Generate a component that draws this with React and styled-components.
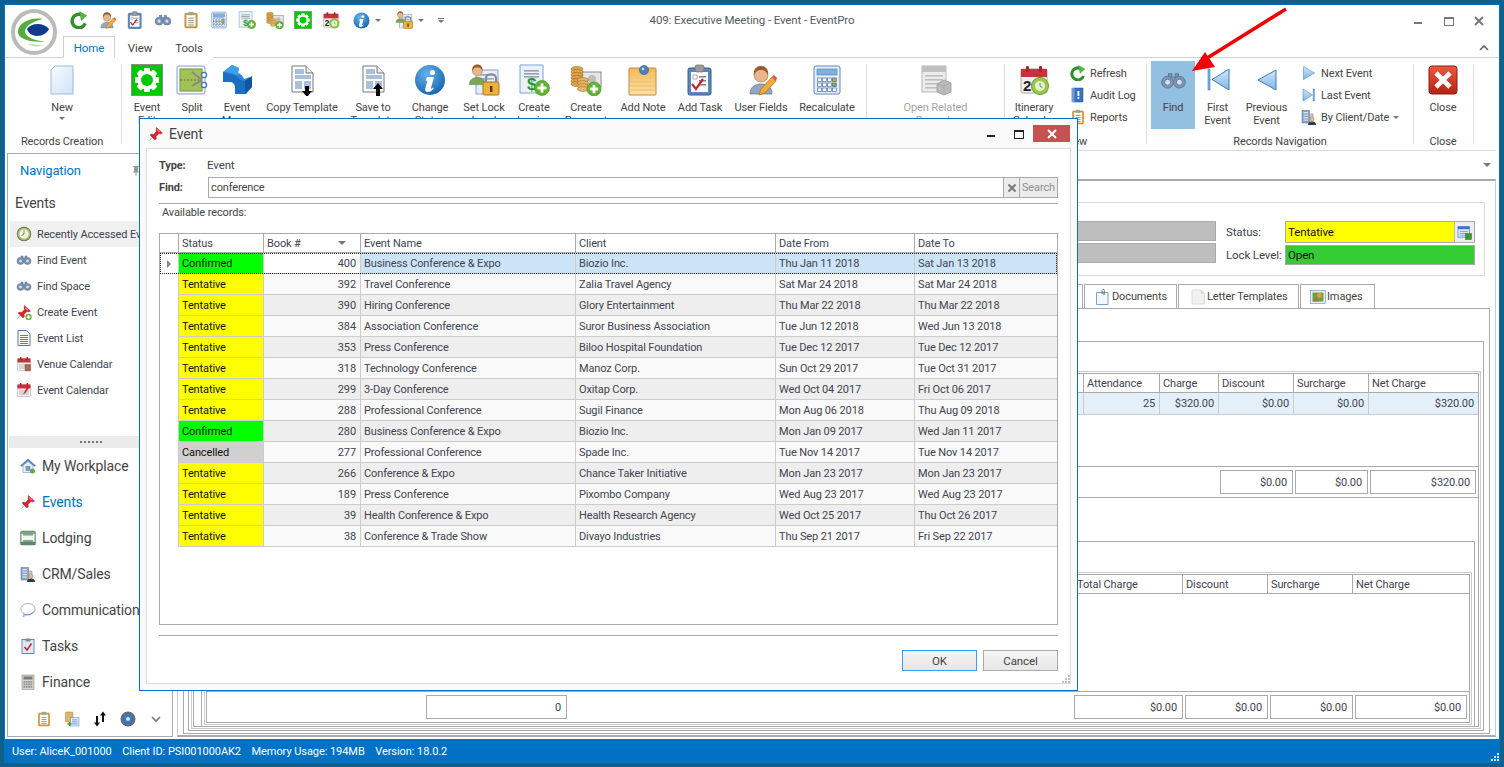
import React from "react";
import styled, { createGlobalStyle } from "styled-components";

const Global = createGlobalStyle`
  html, body { margin: 0; padding: 0; width: 1504px; height: 767px; overflow: hidden; background: #12608a; }
  * { box-sizing: border-box; }
  #root { width: 1504px; height: 767px; }
`;

const FONT = `"Roboto", "Liberation Sans", sans-serif`;

/* ---------- icons ---------- */
const Gear = ({ hole = "#00c800" }) => (
  <g>
    {[0, 45, 90, 135].map((a) => (
      <rect key={a} x="13" y="4" width="6" height="24" rx="1" fill="#fff" transform={`rotate(${a} 16 16)`} />
    ))}
    <circle cx="16" cy="16" r="9.5" fill="#fff" />
    <circle cx="16" cy="16" r="6" fill={hole} />
  </g>
);
const Binoc = () => (
  <g stroke="#5a7394" strokeWidth="1">
    <rect x="10" y="8" width="4" height="6" fill="#7d94b2" />
    <rect x="18" y="8" width="4" height="6" fill="#7d94b2" />
    <rect x="13" y="12" width="6" height="5" fill="#93a5bb" />
    <circle cx="9" cy="18" r="7" fill="#7f95b1" />
    <circle cx="23" cy="18" r="7" fill="#7f95b1" />
    <circle cx="9" cy="18" r="3.6" fill="#cfe0f3" />
    <circle cx="23" cy="18" r="3.6" fill="#cfe0f3" />
  </g>
);
const Plus = ({ x = 24, y = 24, r = 7 }) => (
  <g>
    <circle cx={x} cy={y} r={r} fill="#62b32e" stroke="#3f8f1c" strokeWidth=".6" />
    <rect x={x - r * 0.6} y={y - 1.4} width={r * 1.2} height="2.8" fill="#fff" />
    <rect x={x - 1.4} y={y - r * 0.6} width="2.8" height={r * 1.2} fill="#fff" />
  </g>
);
const Person = ({ x = 0, y = 0, s = 1, body = "#8fa5bd" }) => (
  <g transform={`translate(${x} ${y}) scale(${s})`}>
    <path d="M2 30c0-7 5-10 11-10s11 3 11 10z" fill={body} stroke="#5a6f86" strokeWidth=".7" />
    <circle cx="13" cy="11" r="7" fill="#e8b68c" stroke="#b0774a" strokeWidth=".7" />
    <path d="M6 11c-1-7 4-9 7-9s8 2 7 9c-2-4-4-5-7-5s-5 1-7 5z" fill="#9a5a2a" />
  </g>
);
const Pin = () => (
  <g>
    <path d="M3 29l9-10" stroke="#9a9a9a" strokeWidth="1.6" />
    <path d="M17 3l12 11-4 2-3-1-6 6 1 4-3 3-10-10 3-2 4 1 6-6-1-3z" fill="#d9232b" stroke="#a41218" strokeWidth=".7" />
    <path d="M19 6l6 6-3 1-4-4z" fill="#f37b7f" />
  </g>
);
const Cal = ({ children }) => (
  <g>
    <rect x="3" y="5" width="26" height="24" rx="1.5" fill="#eeeeee" stroke="#a9a9a9" />
    <rect x="3" y="5" width="26" height="8" fill="#c8313a" />
    <rect x="8" y="2" width="3" height="6" rx="1" fill="#b52029" />
    <rect x="21" y="2" width="3" height="6" rx="1" fill="#b52029" />
    {children}
  </g>
);
const Tri = ({ d }) => <path d={d} fill="url(#gTri)" stroke="#3a7dbd" strokeWidth="1" />;
const Clip = ({ c = "#d8a243", children }) => (
  <g>
    <rect x="5" y="4" width="22" height="26" rx="2" fill={c} stroke="#8f6a22" strokeWidth=".8" />
    <rect x="8" y="7" width="16" height="20" fill="#fdfbf2" />
    <rect x="12" y="2" width="8" height="5" rx="1" fill="#a5a5a5" stroke="#777" strokeWidth=".6" />
    {children}
  </g>
);
const Lines = ({ x = 11, w = 10, ys = [12, 16, 20, 24], c = "#8a8a8a" }) => (
  <g>{ys.map((y) => <rect key={y} x={x} y={y} width={w} height="1.6" fill={c} />)}</g>
);
const Tpl = ({ up }) => (
  <g>
    <path d="M6 2h14l7 7v19H6z" fill="#fff" stroke="#777" />
    <path d="M20 2v7h7" fill="#e8e8e8" stroke="#777" />
    <rect x="9" y="5" width="9" height="5" fill="#a9c0dd" />
    <rect x="9" y="11" width="16" height="4" fill="#a9c0dd" />
    <rect x="9" y="17" width="7" height="8" fill="#a9c0dd" />
    <rect x="18" y="17" width="7" height="8" fill="#a9c0dd" />
    {up ? (
      <path d="M21 19l5 6h-3v7h-4v-7h-3z" fill="#000" />
    ) : (
      <path d="M19 22h4v5h3l-5 6-5-6h3z" fill="#000" />
    )}
  </g>
);
const Calc = ({ c = "#5f86c2" }) => (
  <g>
    <rect x="3" y="2" width="26" height="28" rx="2" fill="#e7eef8" stroke={c} />
    <rect x="6" y="5" width="20" height="6" fill="#7fb0df" stroke="#4b7db5" strokeWidth=".6" />
    {[0, 1, 2, 3].map((i) =>
      [0, 1, 2].map((j) => (
        <rect key={`${i}${j}`} x={6.5 + i * 5} y={14 + j * 5} width="3.8" height="3.6" fill={i === 3 && j < 2 ? (j ? "#7fae3b" : "#e09a35") : "#fff"} stroke="#4b6da0" strokeWidth=".7" />
      ))
    )}
  </g>
);

const ICONS = {
  gear: <><rect x=".5" y=".5" width="31" height="31" fill="#00c800" stroke="#8a8a8a" /><Gear /></>,
  split: (
    <g>
      <rect x="1" y="2" width="28" height="28" rx="2" fill="#f2f5fa" stroke="#8aa0c0" />
      <rect x="4" y="5" width="22" height="22" fill="#a2c257" stroke="#7a9a3a" />
      <path d="M4 16h22" stroke="#5e7a26" strokeDasharray="2 1.5" />
      <path d="M16 8l10 8M16 22l10-6" stroke="#888" strokeWidth="2" />
      <circle cx="28" cy="11" r="2.6" fill="#dff" stroke="#4a73a8" strokeWidth="1.3" />
      <circle cx="28" cy="21" r="2.6" fill="#dff" stroke="#4a73a8" strokeWidth="1.3" />
    </g>
  ),
  merge: (
    <g>
      <path d="M2 8l9-7 7 3-1 5c3 1 5 3 6 6l6-2 2 10-6 7h-11v-7c0-3-2-5-5-5H2z" fill="#2a86d8" />
      <path d="M24 17l7-5 0 11-7 7z" fill="#10579f" />
      <path d="M2 8v10h7c3 0 5 2 5 5v7h10V17c-3 0-7-2-8-5z" fill="#1b6fc0" />
      <path d="M2 8l9-7 7 3-2 8c-3-3-9-4-14-4z" fill="#3ea0ea" />
    </g>
  ),
  tplDown: <Tpl />,
  tplUp: <Tpl up />,
  info: (
    <g>
      <circle cx="16" cy="16" r="15" fill="url(#gInfo)" />
      <circle cx="18.5" cy="8.5" r="2.6" fill="#fff" />
      <path d="M13 13h7l-3 11c-.2 1 .6 1 2-.5l.8.8c-2 3-4 3.7-6 3.7-2.4 0-3-1.5-2.5-3.4l2-7.6-1.6-.4z" fill="#fff" />
    </g>
  ),
  lockUser: (
    <g>
      <rect x="8" y="6" width="22" height="24" fill="#e4eefa" stroke="#87a2c8" />
      <Lines x={12} w={14} ys={[10, 14, 18]} c="#8fa9cc" />
      <g transform="translate(0 -1) scale(.72)"><Person body="#7ea64a" /></g>
      <rect x="15" y="18" width="16" height="13" rx="1.5" fill="#f0b040" stroke="#a87415" />
      <path d="M18 18v-4c0-5 10-5 10 0v4" fill="none" stroke="#888" strokeWidth="2" />
      <rect x="22" y="22" width="2.4" height="6" fill="#5a3c0a" />
    </g>
  ),
  invoice: (
    <g>
      <path d="M2 1h23v28H2z" fill="#eaf2fb" stroke="#7fa4d2" />
      <Lines x={6} w={15} ys={[6, 9, 12]} c="#9a9fb0" />
      <text x="9" y="26" fontFamily="Liberation Sans" fontWeight="700" fontSize="17" fill="#1f9a37">$</text>
      <Plus x={24} y={24} r={7.5} />
    </g>
  ),
  coins: (
    <g>
      <rect x="12" y="8" width="19" height="15" fill="#e6e6e6" stroke="#8a8a8a" />
      <circle cx="22" cy="15" r="4" fill="#bdbdbd" />
      {[2, 5, 8, 11, 14, 17].map((y) => <ellipse key={y} cx="7" cy={y + 3} rx="6" ry="2.6" fill="#dca24e" stroke="#9f6c20" strokeWidth=".6" />)}
      {[13, 16, 19, 22].map((y) => <ellipse key={y} cx="13" cy={y + 3} rx="5.5" ry="2.4" fill="#e5b76a" stroke="#9f6c20" strokeWidth=".6" />)}
      <Plus x={24} y={25} r={7} />
    </g>
  ),
  note: (
    <g>
      <rect x="2" y="4" width="27" height="27" rx="1" fill="url(#gNote)" stroke="#c2873a" />
      <Lines x={3} w={25} ys={[13, 17, 21, 25]} c="#f0c679" />
      <circle cx="17" cy="6" r="4.6" fill="#4f80b8" stroke="#2d5a92" strokeWidth=".6" />
      <circle cx="16" cy="5" r="1.4" fill="#b9d2ee" />
    </g>
  ),
  task: (
    <g>
      <rect x="4" y="4" width="23" height="27" rx="2" fill="#5c87bb" stroke="#345f94" />
      <rect x="7" y="8" width="17" height="20" fill="#fff" />
      <rect x="11" y="1" width="9" height="7" rx="2" fill="#9a9a9a" stroke="#6f6f6f" strokeWidth=".7" />
      <rect x="9" y="11" width="4" height="4" fill="none" stroke="#999" strokeWidth=".8" />
      <Lines x={15} w={7} ys={[12, 16, 20]} c="#888" />
      <path d="M8 20l4 5 7-10" fill="none" stroke="#c6232b" strokeWidth="2.2" />
    </g>
  ),
  userFields: (
    <g>
      <Person x={3} y={0} s={1} body="#93a8c0" />
      <path d="M14 31l2-6 11-12 4 4-11 12z" fill="#f2a93a" stroke="#a96f12" strokeWidth=".7" />
      <path d="M27 13l2-2 3 3-1 3z" fill="#e44f4f" />
    </g>
  ),
  calc: <Calc />,
  related: (
    <g opacity=".95">
      <rect x="2" y="2" width="24" height="26" fill="#ececec" stroke="#b5b5b5" />
      <rect x="2" y="2" width="24" height="6" fill="#bdbdbd" />
      <Lines x={5} w={18} ys={[11, 15, 19, 23]} c="#bbb" />
      <path d="M17 20l7-4 7 3v9l-7 3-7-3z" fill="#b8b8b8" stroke="#a2a2a2" />
      <path d="M24 21v10M17 20l7 2 7-3" stroke="#a6a6a6" fill="none" />
    </g>
  ),
  itin: (
    <Cal>
      <text x="5" y="27" fontFamily="Liberation Sans" fontWeight="700" fontSize="15" fill="#222">2</text>
      <circle cx="22" cy="22" r="8.5" fill="#9dc84f" stroke="#6c9a2c" />
      <circle cx="22" cy="22" r="5" fill="#e7f3cf" />
      <path d="M22 19v3l2.4 1.6" stroke="#5f8a26" fill="none" />
    </Cal>
  ),
  refresh: (
    <g>
      <path d="M27 22A12 12 0 1 1 21 7" fill="none" stroke="#2f8f2a" strokeWidth="6" />
      <path d="M17 1l13 7-10 9z" fill="#55b83c" stroke="#2f8f2a" strokeWidth=".6" />
    </g>
  ),
  audit: (
    <g>
      <path d="M5 2h21v28H5z" fill="#3b72c0" stroke="#1e4d94" />
      <rect x="3" y="2" width="6" height="28" fill="#6f9bd8" />
      <rect x="15" y="8" width="3.6" height="10" fill="#fff" />
      <rect x="15" y="20" width="3.6" height="3.6" fill="#fff" />
    </g>
  ),
  reports: <Clip><Lines /></Clip>,
  binoc: <Binoc />,
  first: (
    <g>
      <rect x="6" y="5" width="2" height="21" fill="#7fb2e2" stroke="#3a7dbd" strokeWidth=".6" />
      <Tri d="M27 5v21L10 15.5z" />
    </g>
  ),
  prev: <Tri d="M25 6v20L7 16z" />,
  next: <Tri d="M5 3l22 13L5 29z" />,
  last: (
    <g>
      <Tri d="M4 4l19 12L4 28z" />
      <rect x="24" y="4" width="3" height="24" fill="#7fb2e2" stroke="#3a7dbd" strokeWidth=".7" />
    </g>
  ),
  client: (
    <g>
      <rect x="2" y="3" width="15" height="25" fill="#8ba2c2" stroke="#55708f" />
      {[6, 11, 16, 21].map((y) => <rect key={y} x="5" y={y} width="9" height="2.4" fill="#dbe5f2" />)}
      <rect x="17" y="10" width="7" height="10" fill="#c8c8c8" stroke="#888" />
      <circle cx="22" cy="20" r="4.5" fill="#e8b68c" stroke="#93633a" strokeWidth=".6" />
      <path d="M14 32c0-5 3-7 8-7s8 2 8 7z" fill="#2d3b4d" />
    </g>
  ),
  close: (
    <g>
      <rect x="2" y="2" width="28" height="28" rx="3" fill="url(#gRed)" stroke="#8d1c11" />
      <path d="M9 9l14 14M23 9L9 23" stroke="#fff" strokeWidth="4.6" />
    </g>
  ),
  pin: <Pin />,
  pinAdd: <g><Pin /><Plus x={25} y={26} r={6} /></g>,
  clock: (
    <g>
      <circle cx="16" cy="16" r="14.5" fill="#6d7d58" />
      <circle cx="16" cy="16" r="12.5" fill="#a5bd6c" />
      <circle cx="16" cy="16" r="9.5" fill="#eef0e0" />
      <path d="M16 9v7l-5 3" stroke="#5a6a48" strokeWidth="1.6" fill="none" />
    </g>
  ),
  list: (
    <g>
      <path d="M4 1h17l7 7v23H4z" fill="#fff" stroke="#28548f" strokeWidth="1.6" />
      <Lines x={8} w={16} ys={[10, 14, 18, 22, 26]} c="#2e5da6" />
    </g>
  ),
  venueCal: (
    <Cal>
      <rect x="6" y="16" width="20" height="10" fill="#d6d6d6" />
      <rect x="18" y="17" width="11" height="13" fill="#a86a4c" stroke="#7a4630" strokeWidth=".7" />
    </Cal>
  ),
  eventCal: (
    <Cal>
      <rect x="6" y="16" width="20" height="10" fill="#d6d6d6" />
      <path d="M14 25l9-17 4 2-8 12z" fill="#d9232b" />
    </Cal>
  ),
  home: (
    <g>
      <path d="M16 2L1 15l2 2 13-11 13 11 2-2z" fill="#5b89c2" stroke="#2f5e97" strokeWidth=".8" />
      <path d="M6 15v14h20V15L16 7z" fill="#e9f0f9" stroke="#5b7ea9" />
      <rect x="12" y="17" width="8" height="8" fill="#7fa5d4" stroke="#3c679b" />
      <circle cx="25" cy="26" r="5" fill="#6aa84a" />
    </g>
  ),
  bed: (
    <g>
      <rect x="1" y="2" width="30" height="28" rx="3" fill="#7fa488" stroke="#54795d" />
      <rect x="5" y="11" width="22" height="9" rx="1" fill="#f4f6f2" />
      <rect x="3" y="8" width="3" height="15" fill="#fff" />
      <rect x="26" y="8" width="3" height="15" fill="#fff" />
      <rect x="1" y="24" width="30" height="6" fill="#5c8a67" />
    </g>
  ),
  bubble: (
    <g>
      <path d="M16 3c8 0 14 5 14 11s-6 11-14 11l-3 0-7 5 2-7c-4-2-6-5-6-9C2 8 8 3 16 3z" fill="#fff" stroke="#8aa0b5" strokeWidth="1.6" />
      <path d="M8 24c5 3 14 3 20-5" fill="none" stroke="#4e86c6" strokeWidth="1.8" />
    </g>
  ),
  tasks: (
    <g>
      <rect x="4" y="3" width="24" height="28" fill="#dfe9f5" stroke="#4b6f9e" strokeWidth="1.6" />
      <rect x="11" y="1" width="10" height="6" fill="#8a8a8a" />
      <path d="M9 18l5 6 9-13" fill="none" stroke="#c6232b" strokeWidth="3" />
    </g>
  ),
  finance: (
    <g>
      <rect x="4" y="2" width="24" height="29" fill="#d5d5d0" stroke="#7d7d78" />
      <rect x="7" y="5" width="18" height="6" fill="#747d74" />
      {[0, 1, 2, 3].map((i) => [0, 1, 2].map((j) => <rect key={`${i}${j}`} x={7 + i * 4.7} y={14 + j * 5} width="3.4" height="3.4" fill="#8d8d88" />))}
    </g>
  ),
  yellowClip: <Clip c="#d9a94a"><Lines /></Clip>,
  copyAdd: (
    <g>
      <rect x="3" y="2" width="15" height="20" rx="2" fill="#dfb56c" stroke="#a4762c" />
      <rect x="13" y="13" width="17" height="17" fill="#e2ecf8" stroke="#557fb5" />
      <Lines x={16} w={11} ys={[17, 21, 25]} c="#5f87bb" />
      <path d="M7 26h8M11 22v8" stroke="#3e9a26" strokeWidth="2.6" />
    </g>
  ),
  sort: (
    <g fill="#111">
      <path d="M8 10h4v13h4l-6 8-6-8h4z" />
      <path d="M20 22V9h-4l6-8 6 8h-4v13z" />
    </g>
  ),
  disc: (
    <g>
      <circle cx="16" cy="16" r="15" fill="#5e6c7c" />
      <circle cx="16" cy="16" r="10" fill="#3a79c0" />
      <circle cx="16" cy="16" r="4" fill="#d5e6f8" />
    </g>
  ),
  docClip: (
    <g>
      <path d="M3 7h23v24H3z" fill="#f4f8fd" stroke="#4a86c6" strokeWidth="1.5" />
      <path d="M14 10V3c0-3 5-3 5 0v7c0 2-3 2-3 0V5" fill="none" stroke="#555" strokeWidth="1.3" />
    </g>
  ),
  letter: (
    <g>
      <path d="M4 2h18l7 7v21H4z" fill="#f1f1f1" stroke="#cfcfcf" strokeWidth="1.4" />
      <path d="M22 2v7h7" fill="#dcdcdc" stroke="#cfcfcf" />
    </g>
  ),
  image: (
    <g>
      <rect x="1" y="3" width="30" height="26" fill="#e6edf6" stroke="#7f9bbd" strokeWidth="1.4" />
      <rect x="5" y="7" width="22" height="18" fill="#6ea04a" />
      <circle cx="19" cy="13" r="5" fill="#e59a32" />
      <path d="M5 25l7-9 6 9z" fill="#9a7a36" />
    </g>
  ),
  statusPick: (
    <g>
      <rect x="2" y="3" width="25" height="23" fill="#dfeaf7" stroke="#3b78bf" strokeWidth="1.4" />
      <rect x="2" y="3" width="25" height="6" fill="#3b78bf" />
      <Lines x={6} w={17} ys={[13, 17, 21]} c="#6e93c2" />
      <rect x="18" y="18" width="13" height="13" fill="#3f9a2b" stroke="#2a7519" />
    </g>
  ),
};

const IconSvg = styled.svg`
  flex: none;
  display: block;
`;
const Icon = ({ name, size = 16 }) => (
  <IconSvg width={size} height={size} viewBox="0 0 32 32">{ICONS[name]}</IconSvg>
);

const HiddenSvg = styled.svg`
  position: absolute;
`;
const Defs = () => (
  <HiddenSvg width="0" height="0">
    <defs>
      <linearGradient id="gTri" x1="0" y1="0" x2="0" y2="1"><stop offset="0" stopColor="#d4e7f8" /><stop offset="1" stopColor="#7fb5e6" /></linearGradient>
      <radialGradient id="gInfo" cx=".4" cy=".3" r=".8"><stop offset="0" stopColor="#64b4ee" /><stop offset="1" stopColor="#0f5ea8" /></radialGradient>
      <linearGradient id="gNote" x1="0" y1="0" x2="0" y2="1"><stop offset="0" stopColor="#f6b75c" /><stop offset="1" stopColor="#fde3a6" /></linearGradient>
      <linearGradient id="gRed" x1="0" y1="0" x2="0" y2="1"><stop offset="0" stopColor="#ec5a3f" /><stop offset="1" stopColor="#b32313" /></linearGradient>
      <linearGradient id="gNew" x1="0" y1="0" x2="1" y2="1"><stop offset="0" stopColor="#f8fbff" /><stop offset="1" stopColor="#cfe3f9" /></linearGradient>
    </defs>
  </HiddenSvg>
);

/* ---------- window chrome ---------- */
const Page = styled.div`
  position: relative;
  width: 1504px;
  height: 767px;
  padding: 4px;
  background: #12608a;
  font-family: ${FONT};
  font-size: 11.5px;
  letter-spacing: -0.12px;
  color: #3e4450;
`;
const Win = styled.div`
  width: 1496px;
  height: 759px;
  border: 1px solid #0072c6;
  background: #fff;
  display: flex;
  flex-direction: column;
  position: relative;
`;
const Logo = styled.svg`
  position: absolute;
  left: 5px;
  top: 3px;
`;
const TitleRow = styled.div`
  height: 31px;
  display: grid;
  grid-template-columns: 1fr auto 1fr;
  align-items: center;
`;
const Quick = styled.div`
  display: flex;
  align-items: center;
  padding-left: 60px;
  padding-bottom: 1px;
`;
const QuickSlot = styled.div`
  width: ${(p) => p.$w || 28}px;
  display: flex;
  justify-content: center;
  align-items: center;
  gap: 5px;
`;
const Caret = styled.span`
  display: inline-block;
  width: 0;
  height: 0;
  border-left: 3px solid transparent;
  border-right: 3px solid transparent;
  border-top: 3px solid #777;
`;
const CustomizeMark = styled.span`
  display: flex;
  flex-direction: column;
  align-items: center;
  gap: 1px;
  &::before { content: ""; width: 6px; height: 1px; background: #777; }
`;
const TitleText = styled.div`
  font-size: 11.5px;
  color: #555c66;
  padding-bottom: 2px;
`;
const WinButtons = styled.div`
  display: flex;
  justify-content: flex-end;
  align-items: center;
  padding-right: 5px;
`;
const WinBtn = styled.div`
  width: 30px;
  display: flex;
  justify-content: center;
`;
const TabRow = styled.div`
  height: 22px;
  border-bottom: 1px solid #cfcfcf;
  display: flex;
  align-items: stretch;
  padding-left: 58px;
  position: relative;
`;
const AppTab = styled.div`
  width: ${(p) => p.$w}px;
  height: 22px;
  padding-top: 1px;
  display: flex;
  align-items: center;
  justify-content: center;
  font-size: 11.5px;
  color: ${(p) => (p.$on ? "#0072c6" : "#444")};
  background: #fff;
  ${(p) => (p.$on ? "border: 1px solid #cfcfcf; border-bottom: 1px solid #fff;" : "")}
`;
const Collapse = styled.svg`
  position: absolute;
  right: 10px;
  top: 8px;
`;

/* ---------- ribbon ---------- */
const Ribbon = styled.div`
  height: 92px;
  display: flex;
  background: #fff;
`;
const Group = styled.div`
  width: ${(p) => p.$w}px;
  padding-right: ${(p) => p.$pr || 0}px;
  display: flex;
  flex-direction: column;
  flex: none;
`;
const GroupBody = styled.div`
  height: 75px;
  padding-top: 3px;
  display: flex;
  padding-left: ${(p) => p.$pl || 0}px;
  justify-content: ${(p) => (p.$center ? "center" : "flex-start")};
`;
const GroupLabel = styled.div`
  height: 17px;
  text-align: center;
  font-size: 11px;
  line-height: 17px;
  color: #444;
  white-space: nowrap;
`;
const Sep = styled.div`
  width: 1px;
  flex: none;
  height: 80px;
  margin-top: 6px;
  background: #dcdcdc;
`;
const BigBtn = styled.div`
  width: ${(p) => p.$w}px;
  flex: none;
  height: 68px;
  display: flex;
  flex-direction: column;
  align-items: center;
  padding-top: 3px;
  background: ${(p) => (p.$on ? "#93bfe0" : "transparent")};
  color: ${(p) => (p.$off ? "#a5a5a5" : "#444")};
  font-size: 11px;
  line-height: 13px;
  text-align: center;
  overflow: visible;
`;
const BigLabel = styled.div`
  margin-top: 5px;
  white-space: pre-line;
`;
const FindIconBox = styled.div`
  width: 32px;
  height: 32px;
  display: flex;
  align-items: center;
  justify-content: center;
`;
const SmallCol = styled.div`
  display: flex;
  flex-direction: column;
  margin-left: ${(p) => p.$ml}px;
  margin-top: 1px;
`;
const SmallBtn = styled.div`
  height: 22px;
  display: flex;
  align-items: center;
  gap: 4px;
  font-size: 11px;
  color: #444;
  white-space: nowrap;
`;
const NewCaret = styled(Caret)`
  margin-top: 3px;
`;

/* ---------- body ---------- */
const Body = styled.div`
  height: 589px;
  display: flex;
`;
const Side = styled.div`
  width: 166px;
  margin: 3px 0 2px 2px;
  border: 1px solid #aaa;
  display: flex;
  flex-direction: column;
  flex: none;
  overflow: hidden;
`;
const NavHead = styled.div`
  height: 33px;
  padding: 0 0 0 12px;
  display: flex;
  align-items: center;
  color: #0072c6;
  font-size: 13px;
`;
const NavPin = styled.svg`
  margin-left: auto;
  margin-right: 32px;
`;
const NavSub = styled.div`
  height: 31px;
  padding-left: 7px;
  display: flex;
  align-items: center;
  font-size: 14px;
  color: #444;
`;
const NavList = styled.div`
  margin-top: 3px;
  height: 215px;
`;
const NavItem = styled.div`
  height: 26px;
  margin-left: 2px;
  padding-left: 6px;
  display: flex;
  align-items: center;
  gap: 5px;
  white-space: nowrap;
  font-size: 11px;
  background: ${(p) => (p.$on ? "#f0f0f0" : "transparent")};
`;
const Grip = styled.div`
  height: 12px;
  margin-left: 1px;
  background: #ebebeb;
  display: flex;
  justify-content: center;
  align-items: center;
`;
const GripDots = styled.span`
  width: 22px;
  height: 2px;
  background-image: linear-gradient(90deg, #777 2px, transparent 2px);
  background-size: 4px 2px;
`;
const SectionItem = styled.div`
  height: 36px;
  padding-left: 12px;
  display: flex;
  align-items: center;
  gap: 6px;
  font-size: 14px;
  white-space: nowrap;
  color: ${(p) => (p.$on ? "#0072c6" : "#444")};
`;
const SideFoot = styled.div`
  flex: 1;
  display: flex;
  align-items: center;
  padding: 2px 0 0 22px;
`;
const FootSlot = styled.div`
  width: 28px;
  display: flex;
  justify-content: center;
`;

const Content = styled.div`
  width: 1319px;
  margin-left: 4px;
  display: flex;
  flex-direction: column;
  flex: none;
`;
const TopBar = styled.div`
  height: 29px;
  border-top: 1px solid #dcdcdc;
  display: flex;
  align-items: center;
  justify-content: flex-end;
  padding-right: 5px;
`;
const DownCaret = styled.span`
  width: 0;
  height: 0;
  border-left: 4px solid transparent;
  border-right: 4px solid transparent;
  border-top: 4px solid #777;
`;
const Shell = styled.div`
  flex: 1;
  min-height: 0;
  border-top: 2px solid #aaa;
  border-left: 1px solid #ccc;
  border-right: 1px solid #ccc;
  border-bottom: 2px solid #aaa;
  margin-bottom: 2px;
  display: flex;
  flex-direction: column;
`;
const InfoPanel = styled.div`
  height: 74px;
  flex: none;
  margin: 21px 10px 0 5px;
  border: 1px solid #dcdcdc;
  padding: 18px 9px 0 60px;
  display: flex;
  gap: 10px;
`;
const GrayCol = styled.div`
  flex: 1;
  display: flex;
  flex-direction: column;
  gap: 2px;
`;
const GrayInput = styled.div`
  height: 20px;
  background: #bebebe;
  border: 1px solid #aaa;
`;
const StatusForm = styled.div`
  width: 249px;
  display: grid;
  grid-template-columns: 59px 190px;
  grid-template-rows: 22px 20px;
  row-gap: 2px;
  align-items: center;
  font-size: 11.5px;
`;
const SelectBox = styled.div`
  height: ${(p) => p.$h}px;
  background: ${(p) => p.$bg};
  border: 1px solid #aaa;
  display: flex;
  align-items: center;
  justify-content: space-between;
  padding-left: 2px;
  color: #111;
`;
const PickBtn = styled.div`
  width: 20px;
  height: 100%;
  background: #eee;
  border-left: 1px solid #bbb;
  display: flex;
  align-items: center;
  justify-content: center;
`;
const TabStrip = styled.div`
  height: 25px;
  margin: 8px 120px -1px 0;
  display: flex;
  justify-content: flex-end;
  flex: none;
`;
const DocTab = styled.div`
  width: ${(p) => p.$w}px;
  margin-left: 1px;
  border: 1px solid #aaa;
  display: flex;
  align-items: center;
  gap: 1px;
  padding-left: ${(p) => p.$pl || 0}px;
  font-size: 11px;
  color: #444;
`;
const TabPanel = styled.div`
  flex: 1;
  min-height: 0;
  margin: 0 5px 1px 5px;
  border: 1px solid #aaa;
  display: flex;
  flex-direction: column;
`;
const FrameA = styled.div`
  flex: 1;
  min-height: 0;
  margin: 32px 5px 2px 4px;
  border: 1px solid #aaa;
  display: flex;
  flex-direction: column;
`;
const FrameB = styled.div`
  flex: 1;
  min-height: 0;
  margin: 29px 2px 1px 2px;
  border: 1px solid #ccc;
  display: flex;
  flex-direction: column;
`;
const FrameC = styled.div`
  flex: 1;
  min-height: 0;
  margin: 1px;
  border: 1px solid #aaa;
  display: flex;
  flex-direction: column;
`;
const DataHead = styled.div`
  height: 19px;
  flex: none;
  border-bottom: 1px solid #aaa;
  display: grid;
  grid-template-columns: ${(p) => p.$cols};
  font-size: 11px;
`;
const HeadCell = styled.div`
  border-left: 1px solid #aaa;
  padding-left: 3px;
  display: flex;
  align-items: center;
  justify-content: space-between;
  color: #3e4450;
  white-space: nowrap;
`;
const BlueRow = styled.div`
  height: 22px;
  flex: none;
  display: grid;
  grid-template-columns: ${(p) => p.$cols};
  background: #e4f0f9;
  border-bottom: 1px solid #ccc;
  font-size: 11px;
`;
const BlueCell = styled.div`
  border-left: 1px solid #ccc;
  padding-right: 4px;
  display: flex;
  align-items: center;
  justify-content: flex-end;
`;
const GridGap = styled.div`
  height: ${(p) => p.$h}px;
  flex: none;
  border-bottom: 1px solid #aaa;
`;
const TotalsRow = styled.div`
  height: 31px;
  flex: none;
  border-bottom: 1px solid #aaa;
  display: flex;
  align-items: center;
  padding-right: ${(p) => p.$pr}px;
`;
const SumBox = styled.div`
  width: ${(p) => p.$w}px;
  height: 24px;
  flex: none;
  margin-left: ${(p) => (p.$ml === "auto" ? "auto" : `${p.$ml}px`)};
  border: 1px solid #aaa;
  display: flex;
  align-items: center;
  justify-content: flex-end;
  padding-right: 5px;
  font-size: 11px;
`;
const Box2 = styled.div`
  flex: 1;
  min-height: 0;
  margin: 43px 3px 0 7px;
  border: 1px solid #aaa;
  border-bottom: none;
  display: flex;
  flex-direction: column;
`;
const Box2Light = styled.div`
  flex: 1;
  min-height: 0;
  margin: 30px 2px 1px 2px;
  border: 1px solid #ccc;
  display: flex;
  flex-direction: column;
`;
const Grid2 = styled.div`
  flex: 1;
  min-height: 0;
  margin: 1px;
  border: 1px solid #aaa;
  display: flex;
  flex-direction: column;
`;
const GridBodyFill = styled.div`
  flex: 1;
  border-bottom: 1px solid #aaa;
`;
const FootRow = styled.div`
  height: 30px;
  flex: none;
  display: flex;
  align-items: center;
  padding-right: 2px;
`;

const StatusBar = styled.div`
  height: 23px;
  background: #0072c6;
  color: #fff;
  font-size: 11px;
  letter-spacing: -0.06px;
  display: flex;
  align-items: center;
  gap: 10.5px;
  padding: 1px 0 0 7px;
  position: relative;
`;
const ResizeGrip = styled.div`
  position: absolute;
  right: 0;
  bottom: ${(p) => p.$b}px;
`;

/* ---------- dialog ---------- */
const Dialog = styled.div`
  position: absolute;
  left: 139px;
  top: 118px;
  width: 939px;
  height: 573px;
  border: 1px solid #0072c6;
  background: #fafafa;
  display: flex;
  flex-direction: column;
`;
const DlgTitle = styled.div`
  height: 29px;
  flex: none;
  display: flex;
  align-items: center;
  padding: 0 7px 0 8px;
  font-size: 14px;
  color: #444;
`;
const DlgName = styled.div`
  flex: 1;
  margin-left: 5px;
`;
const DlgCtl = styled.div`
  width: 27px;
  display: flex;
  justify-content: center;
`;
const DlgClose = styled.div`
  width: 37px;
  height: 17px;
  margin-left: 1px;
  background: #c75050;
  display: flex;
  align-items: center;
  justify-content: center;
`;
const DlgInner = styled.div`
  flex: 1;
  min-height: 0;
  margin: 0 6px 6px 6px;
  border: 1px solid #dcdcdc;
  background: #fff;
  padding: 0 12px;
  display: flex;
  flex-direction: column;
  position: relative;
`;
const FormRow = styled.div`
  display: flex;
  align-items: center;
  height: ${(p) => p.$h}px;
  margin-top: ${(p) => p.$mt || 0}px;
  flex: none;
`;
const FormLabel = styled.div`
  width: ${(p) => p.$w}px;
  font-weight: 700;
  font-size: 11px;
  color: #444;
`;
const FindBox = styled.div`
  flex: 1;
  height: 21px;
  border: 1px solid #aaa;
  display: flex;
  align-items: center;
  padding-left: 2px;
  color: #444;
  font-size: 11px;
`;
const FindText = styled.div`
  flex: 1;
`;
const ClearBtn = styled.div`
  width: 16px;
  height: 100%;
  background: #ececec;
  border-left: 1px solid #aaa;
  display: flex;
  align-items: center;
  justify-content: center;
`;
const SearchBtn = styled.div`
  width: 38px;
  height: 100%;
  background: #ececec;
  border-left: 1px solid #aaa;
  display: flex;
  align-items: center;
  justify-content: center;
  color: #8e8e8e;
`;
const Rule = styled.div`
  height: 1px;
  flex: none;
  background: #aaa;
  margin-top: ${(p) => p.$mt}px;
`;
const Avail = styled.div`
  height: 16px;
  padding-left: 3px;
  display: flex;
  align-items: center;
  flex: none;
  font-size: 11px;
  color: #444;
`;
const RecGrid = styled.div`
  height: 392px;
  flex: none;
  margin-top: 13px;
  border: 1px solid #aaa;
`;
const REC_COLS = "18px 85px 97px 215px 200px 139px 1fr";
const RecHead = styled.div`
  height: 19px;
  border-bottom: 1px solid #aaa;
  display: grid;
  grid-template-columns: ${REC_COLS};
  font-size: 11px;
`;
const RecHeadCell = styled.div`
  border-left: ${(p) => (p.$first ? "none" : "1px solid #aaa")};
  padding: 0 ${(p) => (p.$sort ? "14px" : "0")} 0 3px;
  display: flex;
  align-items: center;
  justify-content: space-between;
`;
const RecRow = styled.div`
  height: 21px;
  display: grid;
  grid-template-columns: ${REC_COLS};
  font-size: 11px;
  outline: ${(p) => (p.$sel ? "1px dotted #222" : "none")};
  outline-offset: -1px;
  position: relative;
`;
const RecCell = styled.div`
  border-left: 1px solid #ccc;
  border-bottom: 1px solid #ccc;
  background: ${(p) => p.$bg};
  color: ${(p) => p.$c || "#3e4450"};
  padding: 0 ${(p) => (p.$num ? "4px" : "3px")};
  display: flex;
  align-items: center;
  justify-content: ${(p) => (p.$num ? "flex-end" : "flex-start")};
  white-space: nowrap;
  overflow: hidden;
`;
const RecIndicator = styled.div`
  display: flex;
  align-items: center;
  justify-content: center;
`;
const RowMark = styled.span`
  width: 0;
  height: 0;
  border-top: 4px solid transparent;
  border-bottom: 4px solid transparent;
  border-left: 4px solid #888;
`;
const DlgFoot = styled.div`
  display: flex;
  justify-content: flex-end;
  gap: 6px;
  margin-top: 14px;
  flex: none;
`;
const DlgBtn = styled.div`
  width: 75px;
  height: 21px;
  border: 1px solid ${(p) => (p.$primary ? "#3a9cff" : "#aaa")};
  background: linear-gradient(#f6f6f6, #e6e6e6);
  display: flex;
  align-items: center;
  justify-content: center;
  font-size: 11.5px;
  color: #444;
`;
const ArrowOverlay = styled.svg`
  position: absolute;
  left: 1180px;
  top: 0;
`;

/* ---------- data ---------- */
const BIG = [
  ["gear", "Event\nEdit", 44], ["split", "Split", 46], ["merge", "Event\nMerge", 44],
  ["tplDown", "Copy Template", 86], ["tplUp", "Save to\nTemplate", 56], ["info", "Change\nStatus", 58],
  ["lockUser", "Set Lock\nLevel", 50], ["invoice", "Create\nInvoice", 50], ["coins", "Create\nPayment", 54],
  ["note", "Add Note", 60], ["task", "Add Task", 54], ["userFields", "User Fields", 68], ["calc", "Recalculate", 64],
];
const RECORDS = [
  ["Confirmed", 400, "Business Conference & Expo", "Biozio Inc.", "Thu Jan 11 2018", "Sat Jan 13 2018"],
  ["Tentative", 392, "Travel Conference", "Zalia Travel Agency", "Sat Mar 24 2018", "Sat Mar 24 2018"],
  ["Tentative", 390, "Hiring Conference", "Glory Entertainment", "Thu Mar 22 2018", "Thu Mar 22 2018"],
  ["Tentative", 384, "Association Conference", "Suror Business Association", "Tue Jun 12 2018", "Wed Jun 13 2018"],
  ["Tentative", 353, "Press Conference", "Biloo Hospital Foundation", "Tue Dec 12 2017", "Tue Dec 12 2017"],
  ["Tentative", 318, "Technology Conference", "Manoz Corp.", "Sun Oct 29 2017", "Tue Oct 31 2017"],
  ["Tentative", 299, "3-Day Conference", "Oxitap Corp.", "Wed Oct 04 2017", "Fri Oct 06 2017"],
  ["Tentative", 288, "Professional Conference", "Sugil Finance", "Mon Aug 06 2018", "Thu Aug 09 2018"],
  ["Confirmed", 280, "Business Conference & Expo", "Biozio Inc.", "Mon Jan 09 2017", "Wed Jan 11 2017"],
  ["Cancelled", 277, "Professional Conference", "Spade Inc.", "Tue Nov 14 2017", "Tue Nov 14 2017"],
  ["Tentative", 266, "Conference & Expo", "Chance Taker Initiative", "Mon Jan 23 2017", "Mon Jan 23 2017"],
  ["Tentative", 189, "Press Conference", "Pixombo Company", "Wed Aug 23 2017", "Wed Aug 23 2017"],
  ["Tentative", 39, "Health Conference & Expo", "Health Research Agency", "Wed Oct 25 2017", "Thu Oct 26 2017"],
  ["Tentative", 38, "Conference & Trade Show", "Divayo Industries", "Thu Sep 21 2017", "Fri Sep 22 2017"],
];
const STATUS_BG = { Confirmed: "#00ff00", Tentative: "#ffff00", Cancelled: "#d0d0d0" };
const G1 = "1fr 76px 59px 75px 75px 110px";
const G2 = "1fr 109px 85px 85px 117px";

const WinMark = ({ kind, color = "#555" }) => {
  if (kind === "min") return <svg width="12" height="12"><rect x="1" y="7" width="8" height="2" fill={color} /></svg>;
  if (kind === "max") return <svg width="12" height="12"><rect x="1.5" y="2.5" width="9" height="8" fill="none" stroke={color} /><rect x="1" y="2" width="10" height="2" fill={color} /></svg>;
  return <svg width="12" height="12"><path d="M2 2l8 8M10 2l-8 8" stroke={color} strokeWidth="2" /></svg>;
};
const GripSvg = styled.svg`
  display: block;
`;
const GripMark = ({ c }) => (
  <GripSvg width="8" height="8">
    {[[6, 0], [3, 3], [6, 3], [0, 6], [3, 6], [6, 6]].map(([x, y]) => <rect key={`${x}${y}`} x={x} y={y} width="2" height="2" fill={c} />)}
  </GripSvg>
);

export default function App() {
  return (
    <Page>
      <Global />
      <Defs />
      <Win>
        <TitleRow>
          <Quick>
            {["refresh", "userFields", "task", "binoc", "reports", "calc", "invoice", "coins", "gear", "itin"].map((n) => (
              <QuickSlot key={n}><Icon name={n} size={18} /></QuickSlot>
            ))}
            <QuickSlot $w={44}><Icon name="info" size={17} /><Caret /></QuickSlot>
            <QuickSlot $w={40}><Icon name="lockUser" size={18} /><Caret /></QuickSlot>
            <QuickSlot $w={24}><CustomizeMark><Caret /></CustomizeMark></QuickSlot>
          </Quick>
          <TitleText>409: Executive Meeting - Event - EventPro</TitleText>
          <WinButtons>
            <WinBtn><WinMark kind="min" color="#777" /></WinBtn>
            <WinBtn><WinMark kind="max" color="#777" /></WinBtn>
            <WinBtn><WinMark kind="x" color="#777" /></WinBtn>
          </WinButtons>
        </TitleRow>
        <TabRow>
          <AppTab $w={52} $on>Home</AppTab>
          <AppTab $w={50}>View</AppTab>
          <AppTab $w={48}>Tools</AppTab>
          <Collapse width="10" height="8"><path d="M1 6l4-4 4 4" fill="none" stroke="#666" strokeWidth="1.6" /></Collapse>
        </TabRow>
        <Logo width="48" height="48" viewBox="0 0 48 48">
          <circle cx="24" cy="24" r="21" fill="#fff" stroke="#b9bcb8" strokeWidth="4" />
          <path d="M33 11C20 9 8 15 8 24c0 6 10 11 27 9.5-12-1-20-5-20-10 0-5 7-10 18-12.5z" fill="#52ad3c" />
          <path d="M39 21c-5-6-17-7-22 0 1 3 4 7 10 7 6 0 10-3 12-7z" fill="#123a8c" />
          <path d="M17 36c5 3 12 3 17 1-6 0-12-1-17-1z" fill="#bfe0b0" />
        </Logo>
        <Ribbon>
          <Group $w={116} $pr={2}>
            <GroupBody $center>
              <BigBtn $w={60}>
                <svg width="32" height="32" viewBox="0 0 32 32"><path d="M5 6l4-4h18v28H5z" fill="url(#gNew)" stroke="#9db9d9" /></svg>
                <BigLabel>New</BigLabel>
                <NewCaret />
              </BigBtn>
            </GroupBody>
            <GroupLabel>Records Creation</GroupLabel>
          </Group>
          <Sep />
          <Group $w={744}>
            <GroupBody $pl={3}>
              {BIG.map(([n, l, w]) => (
                <BigBtn key={l} $w={w}><Icon name={n} size={32} /><BigLabel>{l}</BigLabel></BigBtn>
              ))}
            </GroupBody>
          </Group>
          <Sep />
          <Group $w={137}>
            <GroupBody $center>
              <BigBtn $w={80} $off><Icon name="related" size={32} /><BigLabel>{"Open Related\nRecords"}</BigLabel></BigBtn>
            </GroupBody>
          </Group>
          <Sep />
          <Group $w={141}>
            <GroupBody>
              <BigBtn $w={58}><Icon name="itin" size={32} /><BigLabel>{"Itinerary\nCalendar"}</BigLabel></BigBtn>
              <SmallCol $ml={7}>
                <SmallBtn><Icon name="refresh" /> Refresh</SmallBtn>
                <SmallBtn><Icon name="audit" /> Audit Log</SmallBtn>
                <SmallBtn><Icon name="reports" /> Reports</SmallBtn>
              </SmallCol>
            </GroupBody>
            <GroupLabel>View</GroupLabel>
          </Group>
          <Sep />
          <Group $w={266}>
            <GroupBody $pl={4}>
              <BigBtn $w={44} $on><FindIconBox><Icon name="binoc" size={27} /></FindIconBox><BigLabel>Find</BigLabel></BigBtn>
              <BigBtn $w={45}><Icon name="first" size={32} /><BigLabel>{"First\nEvent"}</BigLabel></BigBtn>
              <BigBtn $w={53}><Icon name="prev" size={32} /><BigLabel>{"Previous\nEvent"}</BigLabel></BigBtn>
              <SmallCol $ml={8}>
                <SmallBtn><Icon name="next" /> Next Event</SmallBtn>
                <SmallBtn><Icon name="last" /> Last Event</SmallBtn>
                <SmallBtn><Icon name="client" /> By Client/Date <Caret /></SmallBtn>
              </SmallCol>
            </GroupBody>
            <GroupLabel>Records Navigation</GroupLabel>
          </Group>
          <Sep />
          <Group $w={59} $pr={1}>
            <GroupBody $center>
              <BigBtn $w={50}><Icon name="close" size={32} /><BigLabel>Close</BigLabel></BigBtn>
            </GroupBody>
            <GroupLabel>Close</GroupLabel>
          </Group>
          <Sep />
        </Ribbon>
        <Body>
          <Side>
            <NavHead>
              Navigation
              <NavPin width="8" height="11" viewBox="0 0 8 11"><path d="M1 1h6v1H6v4l1.500 1.500H4.500V11h-1V7.500H.5L2 6V2H1z" fill="#999" /></NavPin>
            </NavHead>
            <NavSub>Events</NavSub>
            <NavList>
              <NavItem $on><Icon name="clock" /> Recently Accessed Events</NavItem>
              <NavItem><Icon name="binoc" /> Find Event</NavItem>
              <NavItem><Icon name="binoc" /> Find Space</NavItem>
              <NavItem><Icon name="pinAdd" /> Create Event</NavItem>
              <NavItem><Icon name="list" /> Event List</NavItem>
              <NavItem><Icon name="venueCal" /> Venue Calendar</NavItem>
              <NavItem><Icon name="eventCal" /> Event Calendar</NavItem>
            </NavList>
            <Grip><GripDots /></Grip>
            <SectionItem><Icon name="home" /> My Workplace</SectionItem>
            <SectionItem $on><Icon name="pin" /> Events</SectionItem>
            <SectionItem><Icon name="bed" /> Lodging</SectionItem>
            <SectionItem><Icon name="client" /> CRM/Sales</SectionItem>
            <SectionItem><Icon name="bubble" /> Communications</SectionItem>
            <SectionItem><Icon name="tasks" /> Tasks</SectionItem>
            <SectionItem><Icon name="finance" /> Finance</SectionItem>
            <SideFoot>
              <FootSlot><Icon name="yellowClip" /></FootSlot>
              <FootSlot><Icon name="copyAdd" /></FootSlot>
              <FootSlot><Icon name="sort" /></FootSlot>
              <FootSlot><Icon name="disc" /></FootSlot>
              <FootSlot><svg width="10" height="8"><path d="M1 2l4 4 4-4" fill="none" stroke="#777" strokeWidth="1.6" /></svg></FootSlot>
            </SideFoot>
          </Side>
          <Content>
            <TopBar><DownCaret /></TopBar>
            <Shell>
              <InfoPanel>
                <GrayCol><GrayInput /><GrayInput /></GrayCol>
                <StatusForm>
                  <span>Status:</span>
                  <SelectBox $h={22} $bg="#ffff00">Tentative<PickBtn><Icon name="statusPick" size={15} /></PickBtn></SelectBox>
                  <span>Lock Level:</span>
                  <SelectBox $h={20} $bg="#33cc33">Open</SelectBox>
                </StatusForm>
              </InfoPanel>
              <TabStrip>
                <DocTab $w={100} />
                <DocTab $w={93} $pl={10}><Icon name="docClip" /> Documents</DocTab>
                <DocTab $w={121} $pl={11}><Icon name="letter" /> Letter Templates</DocTab>
                <DocTab $w={75} $pl={9}><Icon name="image" /> Images</DocTab>
              </TabStrip>
              <TabPanel>
                <FrameA>
                  <FrameB>
                    <FrameC>
                      <DataHead $cols={G1}>
                        <HeadCell />
                        <HeadCell>Attendance</HeadCell>
                        <HeadCell>Charge</HeadCell>
                        <HeadCell>Discount</HeadCell>
                        <HeadCell>Surcharge</HeadCell>
                        <HeadCell>Net Charge</HeadCell>
                      </DataHead>
                      <BlueRow $cols={G1}>
                        <BlueCell />
                        <BlueCell>25</BlueCell>
                        <BlueCell>$320.00</BlueCell>
                        <BlueCell>$0.00</BlueCell>
                        <BlueCell>$0.00</BlueCell>
                        <BlueCell>$320.00</BlueCell>
                      </BlueRow>
                      <GridGap $h={52} />
                      <TotalsRow $pr={2}>
                        <SumBox $w={73} $ml="auto">$0.00</SumBox>
                        <SumBox $w={73} $ml={2}>$0.00</SumBox>
                        <SumBox $w={106} $ml={2}>$320.00</SumBox>
                      </TotalsRow>
                      <Box2>
                        <Box2Light>
                          <Grid2>
                            <DataHead $cols={G2}>
                              <HeadCell />
                              <HeadCell>Total Charge</HeadCell>
                              <HeadCell>Discount</HeadCell>
                              <HeadCell>Surcharge</HeadCell>
                              <HeadCell>Net Charge</HeadCell>
                            </DataHead>
                            <GridBodyFill />
                            <FootRow>
                              <SumBox $w={141} $ml={219}>0</SumBox>
                              <SumBox $w={109} $ml="auto">$0.00</SumBox>
                              <SumBox $w={83} $ml={2}>$0.00</SumBox>
                              <SumBox $w={83} $ml={2}>$0.00</SumBox>
                              <SumBox $w={112} $ml={2}>$0.00</SumBox>
                            </FootRow>
                          </Grid2>
                        </Box2Light>
                      </Box2>
                    </FrameC>
                  </FrameB>
                </FrameA>
              </TabPanel>
            </Shell>
          </Content>
        </Body>
        <StatusBar>
          <span>User: AliceK_001000</span>
          <span>Client ID: PSI001000AK2</span>
          <span>Memory Usage: 194MB</span>
          <span>Version: 18.0.2</span>
          <ResizeGrip $b={1}><GripMark c="#cfe3f5" /></ResizeGrip>
        </StatusBar>
      </Win>

      <Dialog>
        <DlgTitle>
          <Icon name="pin" size={16} />
          <DlgName>Event</DlgName>
          <DlgCtl><WinMark kind="min" color="#222" /></DlgCtl>
          <DlgCtl><WinMark kind="max" color="#222" /></DlgCtl>
          <DlgClose><WinMark kind="x" color="#fff" /></DlgClose>
        </DlgTitle>
        <DlgInner>
          <FormRow $h={20} $mt={6}><FormLabel $w={48}>Type:</FormLabel>Event</FormRow>
          <FormRow $h={21} $mt={2}>
            <FormLabel $w={49}>Find:</FormLabel>
            <FindBox>
              <FindText>conference</FindText>
              <ClearBtn><svg width="10" height="10"><path d="M1.5 1.500l7 7M8.500 1.500l-7 7" stroke="#777" strokeWidth="2" /></svg></ClearBtn>
              <SearchBtn>Search</SearchBtn>
            </FindBox>
          </FormRow>
          <Rule $mt={5} />
          <Avail>Available records:</Avail>
          <RecGrid>
            <RecHead>
              <RecHeadCell $first />
              <RecHeadCell>Status</RecHeadCell>
              <RecHeadCell $sort>Book #<DownCaret /></RecHeadCell>
              <RecHeadCell>Event Name</RecHeadCell>
              <RecHeadCell>Client</RecHeadCell>
              <RecHeadCell>Date From</RecHeadCell>
              <RecHeadCell>Date To</RecHeadCell>
            </RecHead>
            {RECORDS.map((r, i) => {
              const sel = i === 0;
              const alt = i % 2 === 0 ? "#eeeeee" : "#f9f9f9";
              const bg = sel ? "#cce4f7" : alt;
              return (
                <RecRow key={r[1]} $sel={sel}>
                  <RecIndicator>{sel && <RowMark />}</RecIndicator>
                  <RecCell $bg={STATUS_BG[r[0]]} $c="#111">{r[0]}</RecCell>
                  <RecCell $bg={sel ? "#fff" : alt} $num>{r[1]}</RecCell>
                  <RecCell $bg={bg}>{r[2]}</RecCell>
                  <RecCell $bg={bg}>{r[3]}</RecCell>
                  <RecCell $bg={bg}>{r[4]}</RecCell>
                  <RecCell $bg={bg}>{r[5]}</RecCell>
                </RecRow>
              );
            })}
          </RecGrid>
          <Rule $mt={10} />
          <DlgFoot>
            <DlgBtn $primary>OK</DlgBtn>
            <DlgBtn>Cancel</DlgBtn>
          </DlgFoot>
          <ResizeGrip $b={0}><GripMark c="#c4c4c4" /></ResizeGrip>
        </DlgInner>
      </Dialog>

      <ArrowOverlay width="120" height="80" viewBox="0 0 120 80">
        <path d="M106 9L24 60" stroke="#f00000" strokeWidth="3.6" />
        <path d="M12 71L25 52 35 67z" fill="#f00000" />
      </ArrowOverlay>
    </Page>
  );
}
